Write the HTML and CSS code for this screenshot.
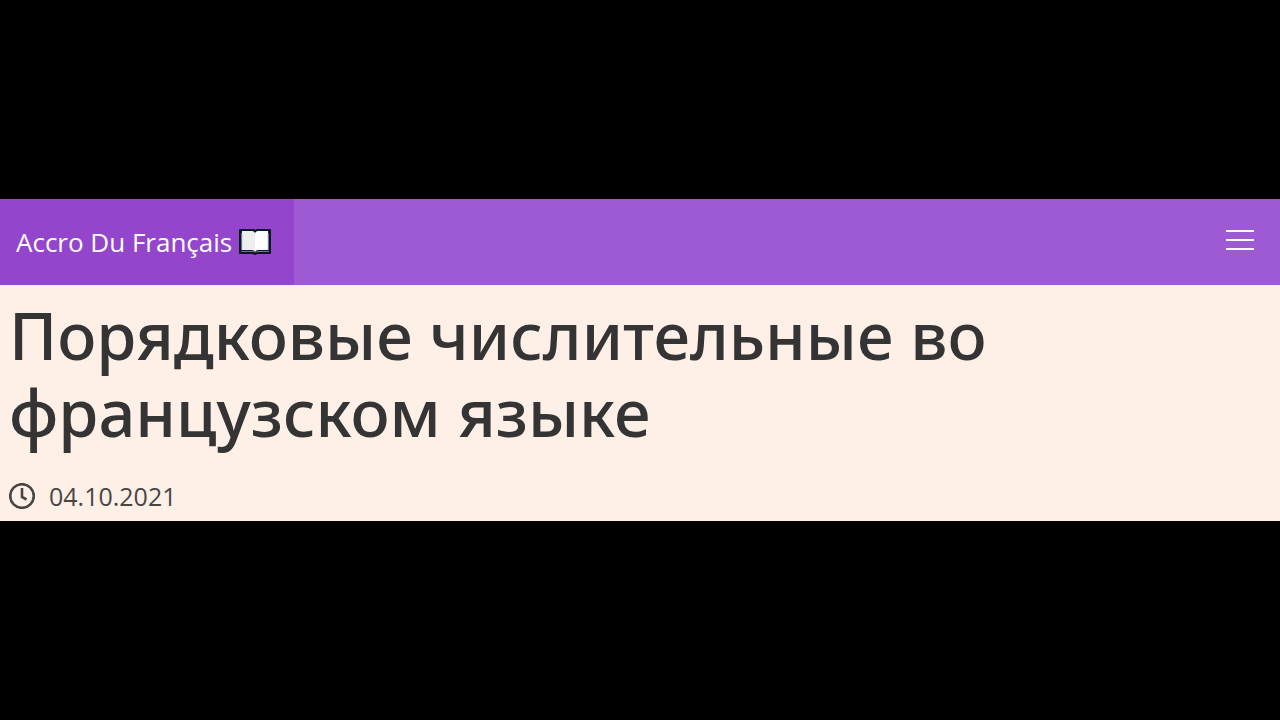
FILE: index.html
```html
<!DOCTYPE html>
<html lang="ru">
<head>
    <meta charset="UTF-8">
    <meta name="viewport" content="width=device-width, initial-scale=1.0">
    <title>Accro Du Français</title>
    <link rel="stylesheet" href="styles.css">
</head>
<body>
    <div class="page">
        <header class="navbar">
            <a class="brand" href="#">
                <span>Accro Du Français</span>
                <svg class="book" viewBox="0 0 32 26" aria-hidden="true">
                    <path d="M1 1h13l2 1 2-1h13v23H18l-2 1-2-1H1z" fill="#0b2033" stroke="#0b1526" stroke-width="2" stroke-linejoin="round"/>
                    <path d="M2 22h12l2 2 2-2h12v1H18l-2 1-2-1H2z" fill="#3b8f9c"/>
                    <path d="M3 2h10q2 0 3 2v19q-1-2-3-2H3z" fill="#eeeeec"/>
                    <path d="M29 2H19q-2 0-3 2v19q1-2 3-2h10z" fill="#fff"/>
                    <path d="M3 4v17M29 4v17" stroke="#b9d5d8" stroke-width="1"/>
                </svg>
            </a>
            <button class="burger" type="button" aria-label="Меню">
                <span></span>
                <span></span>
                <span></span>
            </button>
        </header>

        <main class="article">
            <h1>Порядковые числительные во французском языке</h1>
            <div class="meta">
                <svg class="clock" viewBox="0 0 26 26" aria-hidden="true">
                    <circle cx="13" cy="13" r="11.8"/>
                    <path d="M13 5v9l4.5 2.5"/>
                </svg>
                <time datetime="2021-10-04">04.10.2021</time>
            </div>
        </main>
    </div>
</body>
</html>
```
FILE: styles.css
```css
* {
    margin: 0;
    padding: 0;
    box-sizing: border-box;
}

body {
    min-height: 100vh;
    display: flex;
    align-items: center;
    background: #000;
    color: #343434;
    font-family: 'Open Sans', 'Noto Sans', sans-serif;
}

.page {
    width: 100%;
    background: #fff0e7;
}

.navbar {
    display: flex;
    justify-content: space-between;
    background: #9e5ad3;
}

.brand {
    display: flex;
    align-items: center;
    gap: 7px;
    padding: 24px 23px 24px 16px;
    background: #9345cb;
    color: #fff;
    font-size: 26px;
    line-height: 38px;
    text-decoration: none;
}

.book {
    width: 32px;
    height: 26px;
}

.burger {
    display: flex;
    flex-direction: column;
    justify-content: center;
    gap: 7px;
    padding: 0 26px 4px;
    background: none;
    border: none;
    cursor: pointer;
}

.burger span {
    width: 28px;
    height: 2px;
    background: #fff;
}

.article {
    padding: 12px 9px 7px;
}

h1 {
    max-width: 1100px;
    font-family: 'Noto Sans', 'Open Sans', sans-serif;
    font-size: 65px;
    font-weight: 500;
    line-height: 77px;
}

.meta {
    display: flex;
    align-items: center;
    gap: 14px;
    margin-top: 27px;
    color: #484644;
    font-size: 25px;
    line-height: 36px;
}

.clock {
    width: 26px;
    height: 26px;
    fill: none;
    stroke: #484644;
    stroke-width: 2.6;
}
```
